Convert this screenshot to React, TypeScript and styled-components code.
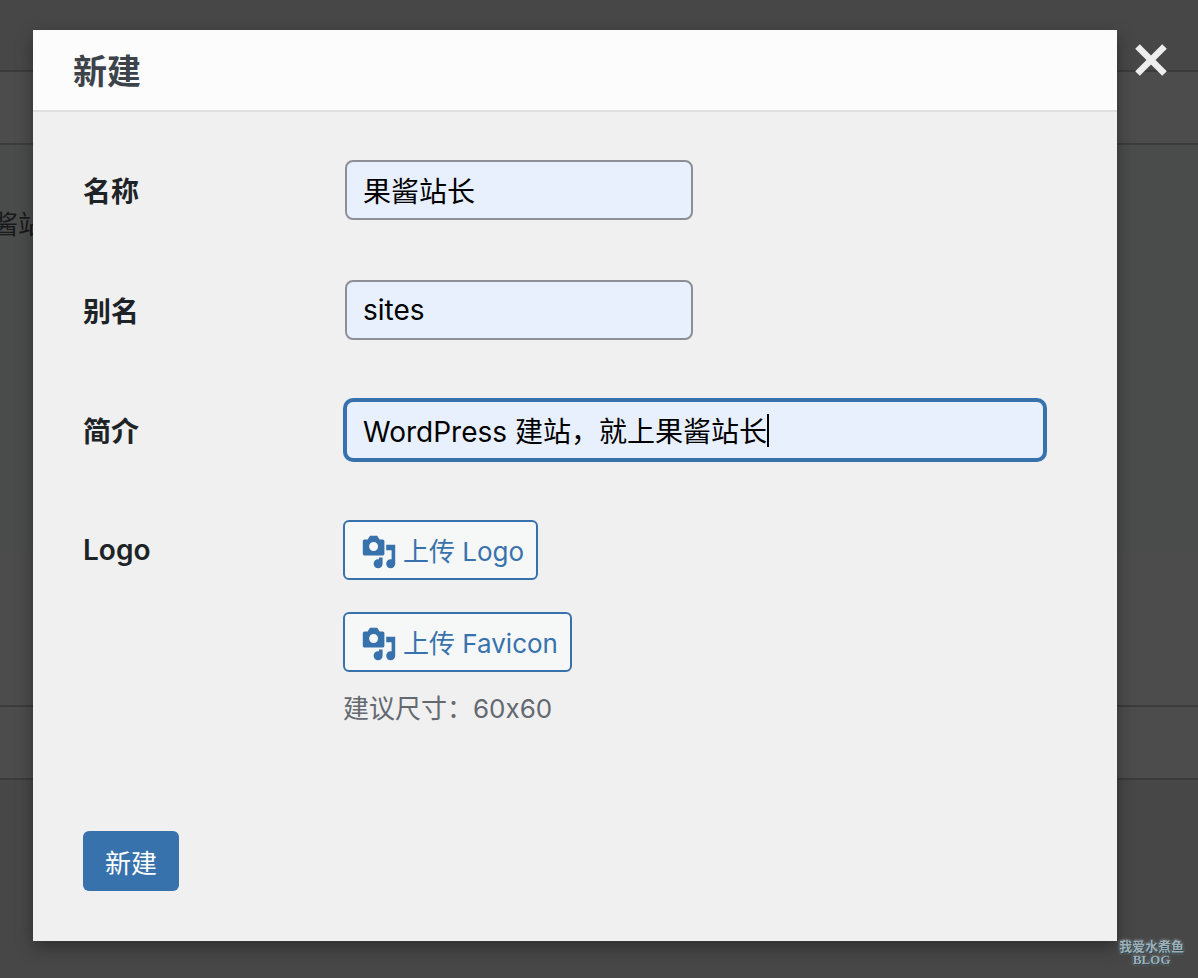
import React from "react";
import styled, { createGlobalStyle, css } from "styled-components";

const GlobalStyle = createGlobalStyle`
  *, *::before, *::after { box-sizing: border-box; }
  body {
    margin: 0;
    background: #474747;
    font-family: Inter, "Noto Sans CJK SC", sans-serif;
    font-size: 28px;
    line-height: 40px;
    color: #1d2327;
  }
  button, input { font-family: inherit; }
`;

const Page = styled.div`
  position: relative;
  min-height: 100vh;
  overflow: hidden;
`;

const Backdrop = styled.div`
  position: absolute;
  inset: 0;
  padding-top: 70px;
  overflow: hidden;
`;

const ListTable = styled.div`
  background: #4c4c4c;
  border-top: 2px solid #3b3b3b;
  border-bottom: 2px solid #3b3b3b;
`;

const ListHead = styled.div`
  height: 73px;
  border-bottom: 2px solid #3b3b3b;
`;

const ListRow = styled.div`
  height: 406px;
  margin-left: -34px;
  padding-top: 60px;
  background: #4a4c4b;
  color: #17191b;
  font-size: 26px;
`;

const ListFoot = styled.div`
  height: 73px;
  margin-top: 154px;
  border-top: 2px solid #3b3b3b;
`;

const Overlay = styled.div`
  position: relative;
  display: flex;
  align-items: flex-start;
  padding: 30px 31px 36px 33px;
`;

const Dialog = styled.section`
  flex: 1;
  min-width: 0;
  background: #f0f0f0;
  box-shadow: 0 6px 16px rgba(0, 0, 0, 0.35);
`;

const DialogHeader = styled.header`
  padding: 22px 40px 18px;
  background: #fcfcfc;
  border-bottom: 2px solid #dfdfdf;
`;

const Title = styled.h1`
  margin: 0;
  color: #3c434a;
  font-size: 34px;
  line-height: 40px;
  font-weight: 600;
`;

const CloseButton = styled.button`
  display: flex;
  margin: 14px 0 0 18px;
  padding: 0;
  border: 0;
  background: none;
  color: #eeeeee;
`;

const Form = styled.form`
  padding: 48px 70px 50px 50px;
`;

const Row = styled.div`
  display: grid;
  grid-template-columns: 260px minmax(0, 1fr);
  margin-bottom: 60px;
`;

const labelStyle = css`
  line-height: 40px;
  font-weight: 600;
`;

const Label = styled.label`
  ${labelStyle}
  padding-top: 12px;
`;

const GroupLabel = styled.span`
  ${labelStyle}
  padding-top: 10px;
`;

const Field = styled.div`
  position: relative;
  padding: 0 2px;
`;

const TextInput = styled.input<{ $wide?: boolean; $active?: boolean }>`
  display: block;
  width: ${(p) => (p.$wide ? "100%" : "348px")};
  max-width: 100%;
  height: 60px;
  padding: 0 16px;
  border: 2px solid ${(p) => (p.$active ? "#3872ad" : "#8c8f94")};
  border-radius: 8px;
  box-shadow: ${(p) => (p.$active ? "0 0 0 2px #3872ad" : "none")};
  outline: none;
  background: #e8f0fe;
  color: #000;
  font-size: 28px;
`;

const Caret = styled.span`
  position: absolute;
  top: 14px;
  left: 424px;
  width: 2px;
  height: 33px;
  background: #000;
`;

const Uploads = styled.div`
  display: flex;
  flex-direction: column;
  align-items: flex-start;
  gap: 32px;
`;

const UploadButton = styled.button`
  display: flex;
  align-items: center;
  gap: 6px;
  height: 60px;
  padding: 4px 12px 0 16px;
  border: 2px solid #3872ad;
  border-radius: 6px;
  background: #f6f7f7;
  color: #3872ad;
  font-size: 26px;
  line-height: 40px;
`;

const Hint = styled.p`
  margin: 17px 0 0;
  color: #646970;
  font-size: 26px;
`;

const SubmitButton = styled.button`
  display: block;
  height: 60px;
  margin-top: 102px;
  padding: 0 22px;
  border: 0;
  border-radius: 6px;
  background: #3872ad;
  color: #fff;
  font-size: 26px;
`;

const Watermark = styled.div`
  position: absolute;
  right: 14px;
  bottom: 12px;
  display: flex;
  flex-direction: column;
  align-items: center;
  color: #9fb0b5;
  font-family: "Liberation Serif", "Noto Sans CJK SC", serif;
  font-size: 13px;
  line-height: 13px;
  font-weight: 700;
  text-shadow: 1px 1px 0 #2c4450, -1px 0 0 #2c4450, 0 0 3px #c0c4c4;
`;

const MediaIcon = () => (
  <svg width="36" height="36" viewBox="0 0 20 20" fill="currentColor" aria-hidden="true">
    <path d="M13 11V4c0-.55-.45-1-1-1h-1.67L9 1H5L3.67 3H2c-.55 0-1 .45-1 1v7c0 .55.45 1 1 1h10c.55 0 1-.45 1-1zM7 4.5c1.38 0 2.500 1.120 2.500 2.500S8.380 9.500 7 9.500 4.500 8.380 4.500 7 5.620 4.500 7 4.500zM14 6h5v10.500c0 1.380-1.120 2.500-2.500 2.500S14 17.880 14 16.500s1.120-2.500 2.500-2.500c.17 0 .34.020.5.050V9h-3V6zm-4 8.050V13h2v3.500c0 1.380-1.120 2.500-2.500 2.500S7 17.880 7 16.500 8.120 14 9.500 14c.17 0 .34.020.5.050z" />
  </svg>
);

const CloseIcon = () => (
  <svg width="32" height="32" viewBox="0 0 32 32" aria-hidden="true">
    <path d="M2.500 2.500L29.500 29.500M29.500 2.500L2.500 29.500" stroke="currentColor" strokeWidth="6.500" />
  </svg>
);

export default function App() {
  return (
    <Page lang="zh-CN">
      <GlobalStyle />
      <Backdrop aria-hidden="true">
        <ListTable>
          <ListHead />
          <ListRow>果酱站长</ListRow>
          <ListFoot />
        </ListTable>
      </Backdrop>
      <Overlay>
        <Dialog role="dialog" aria-labelledby="dialog-title">
          <DialogHeader>
            <Title id="dialog-title">新建</Title>
          </DialogHeader>
          <Form onSubmit={(e: React.FormEvent) => e.preventDefault()}>
            <Row>
              <Label htmlFor="name">名称</Label>
              <Field>
                <TextInput id="name" defaultValue="果酱站长" />
              </Field>
            </Row>
            <Row>
              <Label htmlFor="slug">别名</Label>
              <Field>
                <TextInput id="slug" defaultValue="sites" />
              </Field>
            </Row>
            <Row>
              <Label htmlFor="intro">简介</Label>
              <Field>
                <TextInput id="intro" $wide $active defaultValue="WordPress 建站，就上果酱站长" />
                <Caret />
              </Field>
            </Row>
            <Row role="group" aria-labelledby="logo-label">
              <GroupLabel id="logo-label">Logo</GroupLabel>
              <div>
                <Uploads>
                  <UploadButton type="button">
                    <MediaIcon />
                    上传 Logo
                  </UploadButton>
                  <UploadButton type="button">
                    <MediaIcon />
                    上传 Favicon
                  </UploadButton>
                </Uploads>
                <Hint>建议尺寸：60x60</Hint>
              </div>
            </Row>
            <SubmitButton type="submit">新建</SubmitButton>
          </Form>
        </Dialog>
        <CloseButton type="button" aria-label="关闭">
          <CloseIcon />
        </CloseButton>
      </Overlay>
      <Watermark>
        <span>我爱水煮鱼</span>
        <span>BLOG</span>
      </Watermark>
    </Page>
  );
}
